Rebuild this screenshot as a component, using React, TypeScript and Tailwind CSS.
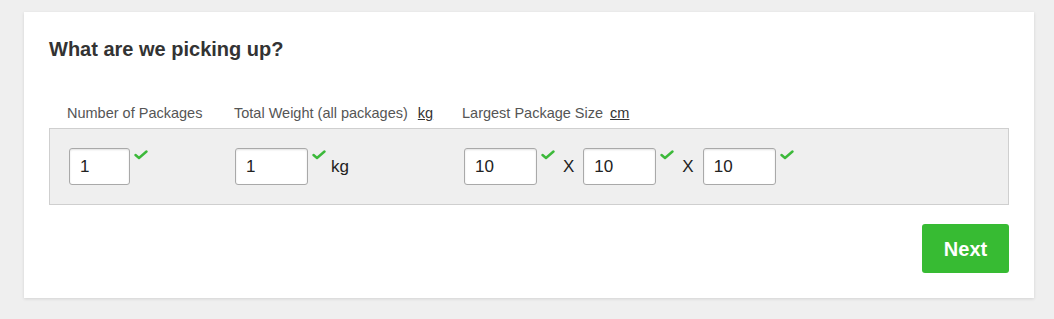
import React from "react";

function Check() {
  return (
    <svg width="14" height="10" viewBox="0 0 14 10" className="self-start mt-[2px] ml-[4px]">
      <path d="M1.5 5 L5 8 L12.5 1.5" fill="none" stroke="#3cb93a" strokeWidth="2.4" strokeLinecap="round" strokeLinejoin="round" />
    </svg>
  );
}

function Field({ value, width }: { value: string; width: string }) {
  return (
    <div
      className={`${width} h-[37px] bg-white border border-[#a9a9a9] rounded-[3px] shadow-[inset_0_1px_2px_rgba(0,0,0,0.12)] flex items-center pl-[10px] text-[17px] text-[#222]`}
    >
      {value}
    </div>
  );
}

export default function App() {
  return (
    <div
      className="min-h-screen bg-[#efefef] pl-[24px] pr-[20px] pt-[12px] pb-[21px]"
      style={{ fontFamily: '"Liberation Sans", Arial, sans-serif' }}
    >
      <div className="bg-white shadow-[0_1px_3px_rgba(0,0,0,0.12)] px-[25px] pt-[26px] pb-[25px]">
        <h2 className="text-[20px] leading-[22px] font-bold text-[#333]">What are we picking up?</h2>

        <div className="mt-[45px] flex text-[14.5px] leading-[17px] text-[#555]">
          <div className="w-[185px] pl-[18px]">Number of Packages</div>
          <div className="w-[228px]">
            Total Weight (all packages)
            <span className="ml-[10px] underline text-[#333]">kg</span>
          </div>
          <div>
            Largest Package Size
            <span className="ml-[7px] underline text-[#333]">cm</span>
          </div>
        </div>

        <div className="mt-[6px] bg-[#efefef] border border-[#cfcfcf] py-[19px] pl-[19px] flex">
          <div className="w-[166px] flex">
            <Field value="1" width="w-[61px]" />
            <Check />
          </div>
          <div className="w-[229px] flex items-center">
            <Field value="1" width="w-[73px]" />
            <Check />
            <span className="ml-[5px] text-[17px] text-[#222]">kg</span>
          </div>
          <div className="flex items-center">
            <Field value="10" width="w-[73px]" />
            <Check />
            <span className="ml-[8px] mr-[9px] text-[17px] text-[#222]">X</span>
            <Field value="10" width="w-[73px]" />
            <Check />
            <span className="ml-[8px] mr-[9px] text-[17px] text-[#222]">X</span>
            <Field value="10" width="w-[73px]" />
            <Check />
          </div>
        </div>

        <div className="mt-[19px] flex justify-end">
          <button className="w-[87px] h-[49px] bg-[#37bb33] rounded-[3px] text-white font-bold text-[20px]">
            Next
          </button>
        </div>
      </div>
    </div>
  );
}
